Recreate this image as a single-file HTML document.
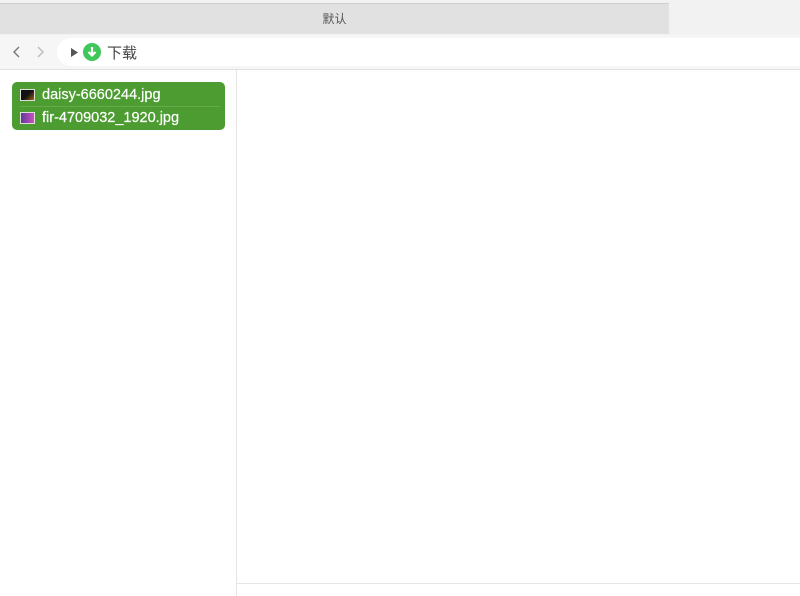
<!DOCTYPE html>
<html><head><meta charset="utf-8"><style>
*{margin:0;padding:0;box-sizing:border-box}
body{width:800px;height:596px;background:#fff;position:relative;overflow:hidden;font-family:"Liberation Sans","Noto Sans CJK SC",sans-serif}
.tabs{position:absolute;left:0;top:0;width:800px;height:35px;background:#f2f2f2}
.tab{position:absolute;left:0;top:3px;width:669px;height:31px;background:#e1e1e1;border-top:1px solid #cfcfcf;text-align:center;font-size:12px;color:#555;line-height:30px}
.tb{position:absolute;left:0;top:35px;width:800px;height:35px;background:#f6f6f6;border-bottom:1px solid #e0e0e0}
.field{position:absolute;left:57px;top:3px;width:760px;height:28px;background:#fff;border-radius:14px}
.side{position:absolute;left:0;top:70px;width:237px;height:526px;border-right:1px solid #e6e6e6}
.bot{position:absolute;left:237px;top:583px;width:563px;height:1px;background:#e6e6e6}
.sel{position:absolute;left:12px;top:82px;width:213px;height:48px;background:#4c9c31;border-radius:5px}
.row{position:absolute;left:8px;height:24px;color:#fff;font-size:14.5px;line-height:24px;padding-left:22px;-webkit-text-stroke:0.2px #fff}
.ico{position:absolute;left:0;top:6px;width:15px;height:12px;border:1px solid #ddd}
</style></head><body>
<div class="tabs"><div class="tab">默认</div></div>
<div class="tb">
<svg style="position:absolute;left:12px;top:10px" width="10" height="14"><path d="M7 2L2 7L7 12" stroke="#777" stroke-width="1.4" fill="none"/></svg>
<svg style="position:absolute;left:36px;top:10px" width="10" height="14"><path d="M2 2L7 7L2 12" stroke="#bbb" stroke-width="1.4" fill="none"/></svg>
<div class="field">
<svg style="position:absolute;left:14px;top:10px" width="8" height="9"><path d="M0 0L7 4.5L0 9Z" fill="#555"/></svg>
<svg style="position:absolute;left:26px;top:5px" width="18" height="18"><circle cx="9" cy="9" r="9" fill="#3fc75a"/><path d="M9 4V12M5.5 9L9 12.5L12.5 9" stroke="#fff" stroke-width="2.2" fill="none"/></svg>
<span style="position:absolute;left:50px;top:4px;font-size:15px;color:#444">下载</span>
</div></div>
<div class="side"></div>
<div class="bot"></div>
<div class="sel">
<div class="row" style="top:1px"><span class="ico" style="background:linear-gradient(135deg,#111 50%,#a06010)"></span>daisy-6660244.jpg</div>
<div style="position:absolute;left:8px;top:24px;width:200px;height:1px;background:#66aa4c"></div>
<div class="row" style="top:24px"><span class="ico" style="background:linear-gradient(90deg,#5a3a9a,#d050c0)"></span>fir-4709032_1920.jpg</div>
</div>
</body></html>
